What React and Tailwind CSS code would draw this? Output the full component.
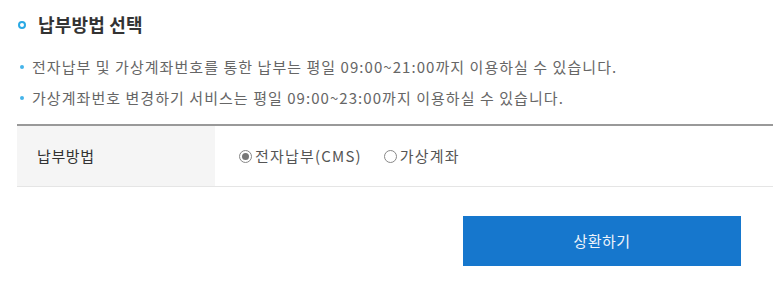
import React from 'react';

const NOTICES = [
  '전자납부 및 가상계좌번호를 통한 납부는 평일 09:00~21:00까지 이용하실 수 있습니다.',
  '가상계좌번호 변경하기 서비스는 평일 09:00~23:00까지 이용하실 수 있습니다.',
];

export default function App() {
  const [method, setMethod] = React.useState('cms');

  return (
    <div
      className="w-[773px] h-[284px] bg-white overflow-hidden pl-[17px]"
      style={{ fontFamily: '"Noto Sans CJK KR", "Noto Sans", sans-serif' }}
    >
      {/* Section Title */}
      <div className="flex items-center h-[48px] pt-[1px]">
        <span className="w-[8px] h-[8px] rounded-full border-[2px] border-[#2aa9e4] ml-[1px] mr-[12px]"></span>
        <h2 className="text-[18px] font-bold text-[#333] tracking-[0.2px]">납부방법 선택</h2>
      </div>

      {/* Notices */}
      <ul className="mt-[9px] flex flex-col gap-[11px]">
        {NOTICES.map((text) => (
          <li key={text} className="flex items-center h-[20px] text-[15px] text-[#666] tracking-[1.05px]">
            <span className="w-[4px] h-[4px] rounded-full bg-[#45b4ea] ml-[3px] mr-[8px]"></span>
            {text}
          </li>
        ))}
      </ul>

      {/* Table */}
      <div className="mt-[16px] border-t-[2px] border-[#999] border-b border-b-[#e5e5e5] flex h-[63px]">
        <div className="w-[198px] bg-[#f5f5f5] flex items-center pl-[20px] text-[15px] text-[#333] tracking-[0.6px]">
          납부방법
        </div>
        <div className="flex-1 flex items-center pl-[24px] text-[15px] text-[#555] gap-[22px] tracking-[1.2px]">
          <label className="flex items-center cursor-pointer" onClick={() => setMethod('cms')}>
            <span className="w-[13px] h-[13px] rounded-full border border-[#888] flex items-center justify-center mr-[3px]">
              {method === 'cms' && <span className="w-[7px] h-[7px] rounded-full bg-[#777]"></span>}
            </span>
            전자납부(CMS)
          </label>
          <label className="flex items-center cursor-pointer" onClick={() => setMethod('va')}>
            <span className="w-[13px] h-[13px] rounded-full border border-[#888] flex items-center justify-center mr-[3px]">
              {method === 'va' && <span className="w-[7px] h-[7px] rounded-full bg-[#777]"></span>}
            </span>
            가상계좌
          </label>
        </div>
      </div>

      {/* Submit */}
      <div className="flex mt-[29px] pl-[446px]">
        <button className="w-[278px] h-[50px] bg-[#1677cd] text-[#eef4fb] text-[15px] tracking-[0.5px]">
          상환하기
        </button>
      </div>
    </div>
  );
}
